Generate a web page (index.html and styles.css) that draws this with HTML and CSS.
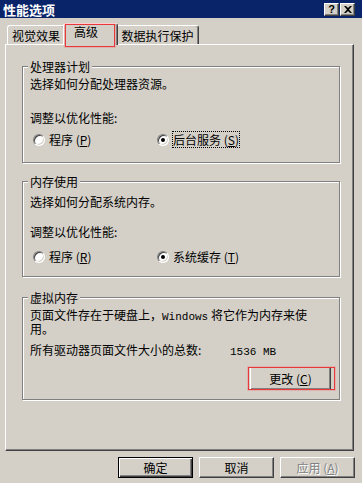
FILE: index.html
```html
<!DOCTYPE html>
<html lang="zh-CN">
<head>
<meta charset="utf-8">
<title>性能选项</title>
<link rel="stylesheet" href="styles.css">
</head>
<body>
<div class="window">
  <div class="titlebar">
    <span class="title">性能选项</span>
    <div class="caption-btns">
      <span class="cbtn help">?</span>
      <span class="cbtn close"><svg width="8" height="7" viewBox="0 0 8 7"><path d="M0 0h2l2 2 2-2h2L5 3.5 8 7H6L4 5 2 7H0l3-3.5z" fill="#000"/></svg></span>
    </div>
  </div>

  <div class="tabs">
    <div class="tab t1">视觉效果</div>
    <div class="tab active">高级<span class="mark mark-tab"></span></div>
    <div class="tab t3">数据执行保护</div>
  </div>

  <div class="panel">
    <div class="group g1">
      <div class="legend">处理器计划</div>
      <p class="line l1">选择如何分配处理器资源。</p>
      <p class="line l2">调整以优化性能:</p>
      <div class="radios">
        <div class="radio first"><span class="circle"></span><span class="lbl">程序 (<u>P</u>)</span></div>
        <div class="radio checked"><span class="circle"></span><span class="lbl focus">后台服务 (<u>S</u>)</span></div>
      </div>
    </div>

    <div class="group g2">
      <div class="legend">内存使用</div>
      <p class="line l1">选择如何分配系统内存。</p>
      <p class="line l2">调整以优化性能:</p>
      <div class="radios">
        <div class="radio first"><span class="circle"></span><span class="lbl">程序 (<u>R</u>)</span></div>
        <div class="radio checked"><span class="circle"></span><span class="lbl">系统缓存 (<u>T</u>)</span></div>
      </div>
    </div>

    <div class="group g3">
      <div class="legend">虚拟内存</div>
      <p class="line l1">页面文件存在于硬盘上，<span class="mono">Windows</span> 将它作为内存来使</p>
      <p class="line l1b">用。</p>
      <div class="total"><span class="total-label">所有驱动器页面文件大小的总数:</span><span class="mono">1536 MB</span></div>
      <div class="change-row">
        <span class="btn change">更改 (<u>C</u>)<span class="mark mark-btn"></span></span>
      </div>
    </div>
  </div>

  <div class="buttons">
    <span class="btn default">确定</span>
    <span class="btn">取消</span>
    <span class="btn disabled">应用 (<u>A</u>)</span>
  </div>
</div>
</body>
</html>
```

FILE: styles.css
```css
* { box-sizing: border-box; }

body {
  margin: 0;
  background: #d4d0c8;
  font-family: "Noto Sans CJK SC", "Liberation Sans", sans-serif;
  font-size: 12px;
  line-height: 12px;
  color: #000;
}

.window {
  width: 362px;
  height: 483px;
  overflow: hidden;
  background: #d4d0c8;
}

/* title bar */
.titlebar {
  height: 18px;
  background: #0a246a;
  display: flex;
  align-items: center;
  justify-content: space-between;
  padding: 0 7px 0 3px;
}
.title {
  color: #fff;
  font-weight: bold;
  font-size: 13px;
  line-height: 13px;
}
.caption-btns {
  display: flex;
  gap: 1px;
  padding-top: 1px;
}
.cbtn {
  width: 15px;
  height: 13px;
  background: #d4d0c8;
  border: 1px solid;
  border-color: #fff #404040 #404040 #fff;
  box-shadow: inset -1px -1px #808080;
  display: flex;
  align-items: center;
  justify-content: center;
  font-family: "Liberation Sans", sans-serif;
  font-weight: bold;
  font-size: 11px;
  line-height: 11px;
}

/* tabs */
.tabs {
  display: flex;
  align-items: flex-end;
  height: 26px;
  padding-left: 7px;
}
.tab {
  height: 19px;
  border: 1px solid;
  border-bottom: 0;
  border-color: #fff #404040 transparent #fff;
  border-radius: 3px 3px 0 0;
  box-shadow: inset -1px 0 #808080;
  padding-top: 3px;
  line-height: 14px;
  text-align: center;
  background: #d4d0c8;
}
.t1 { width: 58px; }
.active {
  width: 55px;
  height: 22px;
  margin: 0 0 -1px -2px;
  padding: 1px 0 0 10px;
  text-align: left;
  position: relative;
  z-index: 2;
}
.t3 { width: 83px; margin-left: -2px; }

.mark {
  position: absolute;
  border: 1px solid #e5393b;
  box-shadow: 0 0 0 1px rgba(240, 120, 120, 0.35);
  pointer-events: none;
}
.mark-tab { left: 1px; right: 2px; top: 0; bottom: -2px; }
.mark-btn { left: -3px; right: -5px; top: -1px; bottom: -1px; }

/* panel */
.panel {
  margin-left: 5px;
  width: 349px;
  height: 407px;
  border: 1px solid;
  border-color: #fff #404040 #404040 #fff;
  box-shadow: inset -1px -1px #808080;
  padding: 21px 13px 0 16px;
}

.group {
  border: 1px solid #808080;
  box-shadow: inset 1px 1px #fff, 1px 1px #fff;
  padding: 0 7px 0 7px;
}
.g2 { margin-top: 18px; }
.g3 { margin-top: 20px; }

.legend {
  width: max-content;
  margin: -7px 0 0 -2px;
  padding: 0 2px;
  line-height: 13px;
  background: #d4d0c8;
}

.line { margin: 0; line-height: 12px; }

.g1 .l1 { margin-top: 5px; }
.g1 .l2 { margin-top: 22px; }
.g1 .radios { margin-top: 7px; }
.g1 { padding-bottom: 14px; }

.g2 .l1 { margin-top: 8px; }
.g2 .l2 { margin-top: 18px; }
.g2 .radios { margin-top: 10px; }
.g2 { padding-bottom: 11px; }

.g3 .l1 { margin-top: 5px; }
.g3 { padding-bottom: 9px; }

.mono {
  font-family: "Liberation Mono", monospace;
  font-size: 11px;
}

/* radios */
.radios {
  display: flex;
  align-items: center;
  height: 17px;
  padding-left: 3px;
}
.radio {
  display: flex;
  align-items: center;
  gap: 3px;
}
.radio.first { width: 124px; }
.circle {
  width: 12px;
  height: 12px;
  border-radius: 50%;
  border: 1px solid;
  border-color: #808080 #fff #fff #808080;
  box-shadow: inset 1px 1px #404040, inset -1px -1px #d4d0c8;
  background: #fff;
  display: flex;
  align-items: center;
  justify-content: center;
  flex: none;
}
.checked .circle::after {
  content: "";
  width: 4px;
  height: 4px;
  border-radius: 50%;
  background: #000;
}
.lbl {
  padding: 2px 1px;
  line-height: 13px;
}
.focus { outline: 1px dotted #000; outline-offset: -1px; }

/* virtual memory */
.total {
  display: flex;
  align-items: baseline;
  margin-top: 9px;
  line-height: 12px;
}
.total-label { width: 200px; }

.change-row {
  display: flex;
  justify-content: flex-end;
  padding-right: 1px;
  margin-top: 9px;
}

/* buttons */
.btn {
  display: flex;
  align-items: center;
  justify-content: center;
  width: 75px;
  height: 21px;
  border: 1px solid;
  border-color: #fff #404040 #404040 #fff;
  box-shadow: inset -1px -1px #808080;
  background: #d4d0c8;
  position: relative;
}
.btn.change { width: 81px; height: 23px; }
.btn.default {
  border-color: #000;
  box-shadow: inset 1px 1px #fff, inset -1px -1px #404040, inset -2px -2px #808080;
}
.btn.disabled {
  color: #808080;
  text-shadow: 1px 1px #fff;
}

.buttons {
  display: flex;
  justify-content: flex-end;
  gap: 6px;
  padding-right: 7px;
  margin-top: 6px;
}
```
